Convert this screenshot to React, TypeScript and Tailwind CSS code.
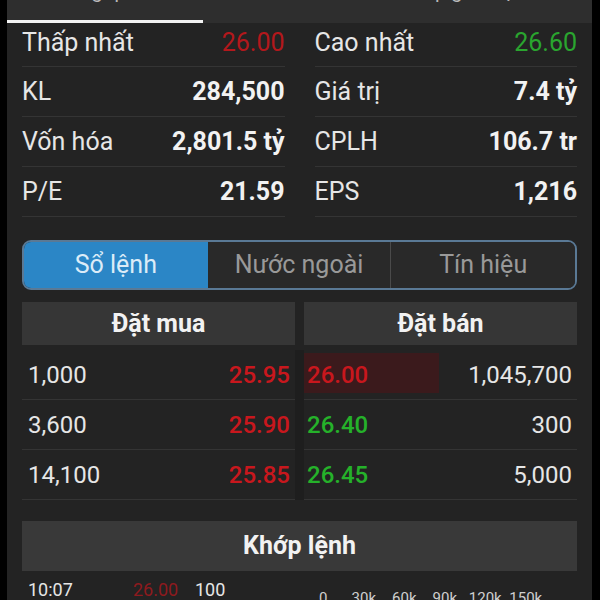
import React from "react";

const FONT = { fontFamily: "Roboto, 'Noto Sans', sans-serif" };

const STATS: [string, string, string][] = [
  ["KL", "284,500", "Giá trị"],
  ["Vốn hóa", "2,801.5 tỷ", "CPLH"],
  ["P/E", "21.59", "EPS"],
];
const STATS_RIGHT = ["7.4 tỷ", "106.7 tr", "1,216"];

const BOOK = [
  { bq: "1,000", bp: "25.95", ap: "26.00", aq: "1,045,700", askUp: false, bar: true },
  { bq: "3,600", bp: "25.90", ap: "26.40", aq: "300", askUp: true, bar: false },
  { bq: "14,100", bp: "25.85", ap: "26.45", aq: "5,000", askUp: true, bar: false },
];

const AXIS = ["0", "30k", "60k", "90k", "120k", "150k"];

function StatCell({ label, value, valueClass }: { label: string; value: string; valueClass: string }) {
  return (
    <div className="flex h-[50px] items-center justify-between border-b border-[#343434]">
      <span className="text-[25px] text-[#e6e6e6]">{label}</span>
      <span className={`text-[25px] ${valueClass}`}>{value}</span>
    </div>
  );
}

export default function App() {
  return (
    <div className="flex h-[600px] w-[600px] overflow-hidden bg-black" style={FONT}>
      <div className="ml-[7px] flex w-[585px] flex-col bg-[#232323]">
        {/* top tabs, mostly scrolled out of view */}
        <div className="relative h-[23px] shrink-0 overflow-hidden bg-[#2e2e2e]">
          <div className="flex h-full -translate-y-[20px] text-[20px] leading-[23px] text-[#b8b8b8]">
            <span className="w-[196px] text-center">Tổng quan</span>
            <span className="w-[150px] text-center">Tin tức</span>
            <span className="w-[239px] text-center">Top giao dịch</span>
          </div>
          <div className="absolute bottom-0 left-0 h-[3px] w-[196px] bg-[#f2f2f2]" />
        </div>

        <div className="flex flex-col px-[15px]">
          {/* stats */}
          <div className="grid grid-cols-2 gap-x-[30px]">
            <div className="flex h-[44px] items-center justify-between border-b border-[#343434] pb-[4px]">
              <span className="text-[25px] text-[#e6e6e6]">Thấp nhất</span>
              <span className="text-[25px] text-[#b3181c]">26.00</span>
            </div>
            <div className="flex h-[44px] items-center justify-between border-b border-[#343434] pb-[4px]">
              <span className="text-[25px] text-[#e6e6e6]">Cao nhất</span>
              <span className="text-[25px] text-[#2aa52f]">26.60</span>
            </div>
            {STATS.map(([l, v, r], i) => (
              <React.Fragment key={l}>
                <StatCell label={l} value={v} valueClass="font-bold text-[#f2f2f2]" />
                <StatCell label={r} value={STATS_RIGHT[i]} valueClass="font-bold text-[#f2f2f2]" />
              </React.Fragment>
            ))}
          </div>

          {/* segmented control */}
          <div className="mt-[23px] grid h-[50px] grid-cols-3 overflow-hidden rounded-[9px] border-2 border-[#5a7995] text-[25px]">
            <div className="flex items-center justify-center bg-[#2b86c6] text-[#dcecf8]">Sổ lệnh</div>
            <div className="flex items-center justify-center border-r border-[#4a4a4a] bg-[#292929] text-[#999]">
              Nước ngoài
            </div>
            <div className="flex items-center justify-center bg-[#292929] text-[#999]">Tín hiệu</div>
          </div>

          {/* order book */}
          <div className="mt-[12px] grid grid-cols-2 gap-x-[9px]">
            <div className="flex h-[43px] items-center justify-center bg-[#363636] text-[25px] font-bold text-[#f2f2f2]">
              Đặt mua
            </div>
            <div className="flex h-[43px] items-center justify-center bg-[#363636] text-[25px] font-bold text-[#f2f2f2]">
              Đặt bán
            </div>
          </div>
          <div className="mt-[5px] grid grid-cols-2 gap-x-[9px] bg-[#1e1e1e]">
            {BOOK.map((r) => (
              <React.Fragment key={r.bq}>
                <div className="flex h-[50px] items-center justify-between border-b border-[#343434] bg-[#232323] pl-[6px] pr-[5px]">
                  <span className="text-[24px] text-[#e6e6e6]">{r.bq}</span>
                  <span className="text-[24px] font-medium text-[#c8171d]">{r.bp}</span>
                </div>
                <div className="relative flex h-[50px] items-center justify-between border-b border-[#343434] bg-[#232323] pl-[3px] pr-[5px]">
                  {r.bar && <div className="absolute left-0 top-[3px] h-[40px] w-[135px] bg-[#3b1a1c]" />}
                  <span
                    className={`relative text-[24px] font-medium ${r.askUp ? "text-[#25b12a]" : "text-[#c8171d]"}`}
                  >
                    {r.ap}
                  </span>
                  <span className="relative text-[24px] text-[#e6e6e6]">{r.aq}</span>
                </div>
              </React.Fragment>
            ))}
          </div>

          {/* matched orders */}
          <div className="mt-[21px] flex h-[50px] items-center justify-center bg-[#393939] text-[25px] font-bold text-[#f2f2f2]">
            Khớp lệnh
          </div>
          <div className="flex h-[30px] items-start pt-[5px]">
            <span className="w-[111px] pl-[6px] text-[18px] text-[#e6e6e6]">10:07</span>
            <span className="w-[62px] text-[18px] text-[#8e1a1e]">26.00</span>
            <span className="w-[108px] text-[18px] text-[#e6e6e6]">100</span>
            <div className="flex pt-[11px] text-[15px] text-[#cfcfcf]">
              {AXIS.map((a) => (
                <span key={a} className="w-[40.5px] text-center">
                  {a}
                </span>
              ))}
            </div>
          </div>
        </div>
      </div>
    </div>
  );
}
